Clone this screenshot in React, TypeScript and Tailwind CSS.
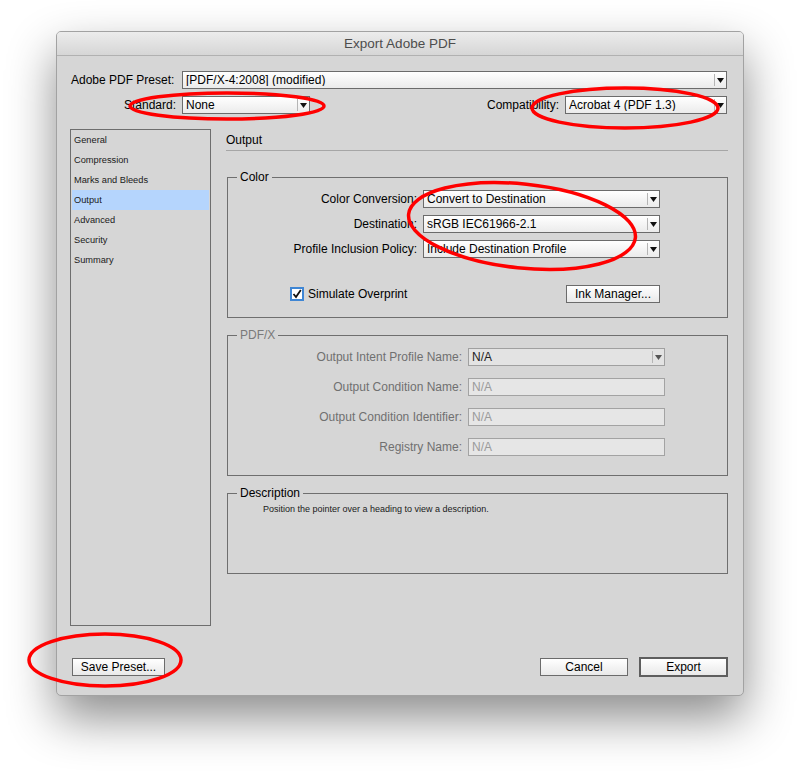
import React from "react"

const font = "font-['Liberation_Sans',Arial,sans-serif]"

function Arrow({ color = "#111" }: { color?: string }) {
  return (
    <svg width="7" height="5" viewBox="0 0 7 5">
      <path d="M0 0 L7 0 L3.5 5 Z" fill={color} />
    </svg>
  )
}

function Dropdown({ value, width, dim }: { value: string; width: string; dim?: boolean }) {
  return (
    <div
      className={`${width} flex h-[18px] items-center border pl-[3px] text-[12px] leading-none ${
        dim
          ? "border-[#a0a0a0] bg-[#e3e3e3] text-[#222]"
          : "border-[#6b6b6b] bg-gradient-to-b from-white to-[#ebebeb] text-black"
      }`}
    >
      <span className="flex-1 truncate">{value}</span>
      <div className="flex h-[12px] w-[12px] items-center justify-center border-l border-[#b5b5b5]">
        <Arrow color={dim ? "#555" : "#111"} />
      </div>
    </div>
  )
}

function Field({ value }: { value: string }) {
  return (
    <div className="flex h-[18px] w-[197px] items-center border border-[#a3a3a3] bg-[#e6e6e6] pl-[3px] text-[12px] leading-none text-[#9a9a9a]">
      {value}
    </div>
  )
}

function Button({ label, width, primary }: { label: string; width: string; primary?: boolean }) {
  return (
    <button
      className={`${width} flex items-center justify-center bg-gradient-to-b from-white to-[#e9e9e9] text-[12px] leading-none text-black ${
        primary ? "h-[20px] border-2 border-[#5e5e5e]" : "h-[18px] border border-[#6b6b6b]"
      }`}
    >
      {label}
    </button>
  )
}

function Group({ title, dim, children }: { title: string; dim?: boolean; children: React.ReactNode }) {
  return (
    <fieldset className="m-0 border border-[#6f6f6f] p-0">
      <legend
        className={`ml-[9px] px-[3px] text-[12px] leading-[14px] ${dim ? "text-[#7a7a7a]" : "text-black"}`}
      >
        {title}
      </legend>
      {children}
    </fieldset>
  )
}

const pages = ["General", "Compression", "Marks and Bleeds", "Output", "Advanced", "Security", "Summary"]

export default function App() {
  return (
    <div className={`relative h-[776px] w-[800px] overflow-hidden bg-white pl-[56px] pt-[31px] ${font}`}>
      <div className="flex h-[665px] w-[688px] flex-col overflow-hidden rounded-[5px] border border-[#a2a2a2] bg-[#d6d6d6] shadow-[0_22px_48px_rgba(0,0,0,0.45)]">
        {/* title bar */}
        <div className="h-[24px] border-b border-[#b1b1b1] bg-gradient-to-b from-[#ececec] to-[#d6d6d6] text-center text-[13.5px] leading-[23px] text-[#4d4d4d]">
          Export Adobe PDF
        </div>

        {/* preset rows */}
        <div className="flex items-center pl-[14px] pr-[16px] pt-[15px] text-[12px]">
          <span className="w-[105px]">Adobe PDF Preset:</span>
          <div className="ml-[6px]">
            <Dropdown value="[PDF/X-4:2008] (modified)" width="w-[545px]" />
          </div>
        </div>
        <div className="mt-[7px] flex items-center pl-[14px] pr-[16px] text-[12px]">
          <span className="w-[105px] text-right">Standard:</span>
          <div className="ml-[6px]">
            <Dropdown value="None" width="w-[128px]" />
          </div>
          <div className="ml-auto flex items-center">
            <span>Compatibility:</span>
            <div className="ml-[6px]">
              <Dropdown value="Acrobat 4 (PDF 1.3)" width="w-[162px]" />
            </div>
          </div>
        </div>

        {/* main area */}
        <div className="mt-[15px] flex pl-[13px]">
          <div className="h-[497px] w-[141px] border border-[#6e6e6e] px-[1px]">
            {pages.map((p) => (
              <div
                key={p}
                className={`h-[20px] pl-[2px] text-[9.25px] leading-[20px] text-[#1a1a1a] ${
                  p === "Output" ? "bg-[#b5d5fd]" : ""
                }`}
              >
                {p}
              </div>
            ))}
          </div>

          <div className="ml-[15px] w-[502px]">
            <div className="border-b border-[#a6a6a6] pb-[3px] pt-[4px] text-[12px] leading-[14px]">Output</div>

            <div className="mt-[19px] ml-[1px]">
              <Group title="Color">
                <div className="flex flex-col gap-[7px] pt-[6px] text-[12px]">
                  {[
                    ["Color Conversion:", "Convert to Destination"],
                    ["Destination:", "sRGB IEC61966-2.1"],
                    ["Profile Inclusion Policy:", "Include Destination Profile"],
                  ].map(([l, v]) => (
                    <div key={l} className="flex items-center">
                      <span className="w-[189px] text-right">{l}</span>
                      <div className="ml-[6px]">
                        <Dropdown value={v} width="w-[237px]" />
                      </div>
                    </div>
                  ))}
                </div>
                <div className="mt-[27px] flex w-[432px] items-center pb-[14px] pl-[62px] text-[12px]">
                  <span className="flex h-[14px] w-[14px] items-center justify-center border-2 border-[#3f86d4] bg-white">
                    <svg width="10" height="10" viewBox="0 0 10 10">
                      <path d="M1.5 5 L4 8 L8.8 1" fill="none" stroke="#111" strokeWidth="1.8" />
                    </svg>
                  </span>
                  <span className="ml-[4px]">Simulate Overprint</span>
                  <div className="ml-auto">
                    <Button label="Ink Manager..." width="w-[94px]" />
                  </div>
                </div>
              </Group>
            </div>

            <div className="mt-[10px] ml-[1px]">
              <Group title="PDF/X" dim>
                <div className="flex flex-col gap-[12px] pb-[19px] pt-[6px] text-[12px] text-[#707070]">
                  {[
                    ["Output Intent Profile Name:", "sel"],
                    ["Output Condition Name:", "N/A"],
                    ["Output Condition Identifier:", "N/A"],
                    ["Registry Name:", "N/A"],
                  ].map(([l, v]) => (
                    <div key={l} className="flex items-center">
                      <span className="w-[234px] text-right">{l}</span>
                      <div className="ml-[6px]">
                        {v === "sel" ? <Dropdown value="N/A" width="w-[197px]" dim /> : <Field value={v} />}
                      </div>
                    </div>
                  ))}
                </div>
              </Group>
            </div>

            <div className="mt-[10px] ml-[1px]">
              <Group title="Description">
                <div className="h-[73px] pl-[35px] pt-[4px] text-[9px] leading-[11px] text-[#1a1a1a]">
                  Position the pointer over a heading to view a description.
                </div>
              </Group>
            </div>
          </div>
        </div>

        {/* buttons */}
        <div className="mt-[31px] flex items-center pl-[15px] pr-[15px]">
          <Button label="Save Preset..." width="w-[93px]" />
          <div className="ml-auto flex items-center gap-[11px]">
            <Button label="Cancel" width="w-[88px]" />
            <Button label="Export" width="w-[89px]" primary />
          </div>
        </div>
      </div>

      {/* red annotation marks */}
      <svg className="pointer-events-none absolute left-0 top-0" width="800" height="776" viewBox="0 0 800 776">
        <g fill="none" stroke="#ff0000" strokeWidth="3.5">
          <ellipse cx="227" cy="106" rx="97" ry="13" />
          <ellipse cx="625" cy="108" rx="93" ry="20" />
          <ellipse cx="522" cy="226" rx="114" ry="42" transform="rotate(6 522 226)" />
          <ellipse cx="105" cy="660" rx="76" ry="26" />
        </g>
      </svg>
    </div>
  )
}
